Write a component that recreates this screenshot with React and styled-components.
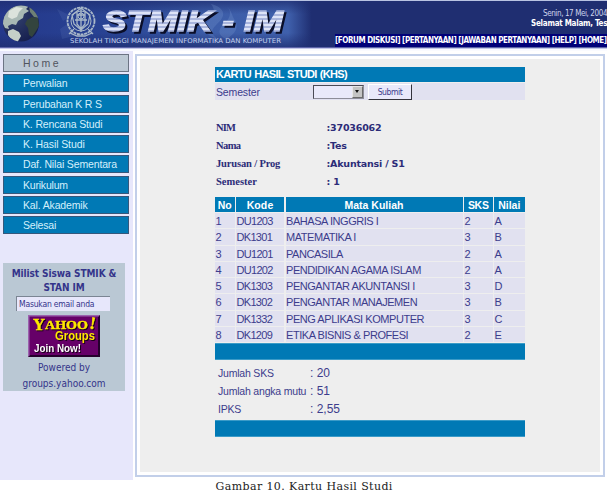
import React from "react";
import styled, { createGlobalStyle } from "styled-components";

const GlobalStyle = createGlobalStyle`
  * {
    box-sizing: border-box;
  }
  body {
    margin: 0;
    width: 607px;
    height: 494px;
    overflow: hidden;
    background: #fff;
    color: #3c3c8c;
    font-family: "Liberation Sans", Arial, sans-serif;
    font-size: 11px;
  }
`;

const Page = styled.div`
  width: 607px;
  height: 494px;
  overflow: hidden;
`;

const Header = styled.header`
  display: flex;
  height: 51px;
  border-top: 1px solid #b9c3e2;
  background: linear-gradient(#1f2e71 46px, #5d64a8 46px, #5d64a8 47px, #c3c7e8 47px, #c3c7e8 48px, #fafbff 48px);
`;

const Banner = styled.svg`
  flex: none;
  width: 335px;
  height: 46px;
`;

const BannerTitle = styled.text`
  font: italic bold 30px "Liberation Sans", Arial, sans-serif;
  filter: drop-shadow(2px 2px 0 #0a0e28);
`;

const HeaderInfo = styled.div`
  width: 272px;
  height: 46px;
  overflow: hidden;
  white-space: nowrap;
  color: #fff;
  font-family: "DejaVu Sans Condensed", "DejaVu Sans", sans-serif;
`;

const Today = styled.div`
  padding: 7px 0 0 208px;
  height: 17px;
  font-size: 8px;
  line-height: 12px;
  color: #cdd3ec;
  letter-spacing: -0.4px;
`;

const Greeting = styled.div`
  padding-left: 196px;
  height: 16px;
  font-size: 8px;
  font-weight: bold;
  line-height: 11px;
  letter-spacing: -0.25px;
`;

const TopLinks = styled.nav`
  height: 13px;
  background: #000078;
  font-size: 8px;
  font-weight: bold;
  line-height: 13px;
  letter-spacing: -0.44px;
`;

const Body = styled.div`
  display: flex;
  height: 429px;
`;

const Sidebar = styled.aside`
  width: 133px;
  padding: 3px 0 0 3px;
  background: #e7e7fb;
`;

const Menu = styled.div`
  display: flex;
  flex-direction: column;
  gap: 2.3px;
  height: 182px;
`;

const MenuItem = styled.div`
  width: 126px;
  height: 18px;
  flex: none;
  padding-left: 19px;
  border: 1px solid ${(props) => (props.$active ? "#6c7484" : "#35587c")};
  background: ${(props) => (props.$active ? "#bcc8d4" : "#0079b5")};
  color: ${(props) => (props.$active ? "#50545e" : "#d4f0fc")};
  font-size: 10.5px;
  line-height: 17px;
  letter-spacing: ${(props) => props.$spacing || 0}px;
  white-space: nowrap;
`;

const Milist = styled.div`
  display: flex;
  flex-direction: column;
  align-items: center;
  width: 122px;
  height: 128px;
  margin-top: 27px;
  padding-top: 4px;
  background: #bac8d4;
  color: #34348a;
  font-family: "DejaVu Sans Condensed", "DejaVu Sans", sans-serif;
`;

const MilistTitle = styled.div`
  font-size: 10px;
  font-weight: bold;
  line-height: 13.5px;
  height: 30px;
  text-align: center;
  white-space: nowrap;
  letter-spacing: -0.08px;
`;

const EmailInput = styled.div`
  width: 94px;
  height: 15px;
  margin-right: 2px;
  padding-left: 2px;
  border-top: 1px solid #7b8593;
  border-left: 1px solid #7b8593;
  background: #e7e7fb;
  font-size: 8.5px;
  line-height: 14px;
  white-space: nowrap;
  letter-spacing: -0.2px;
`;

const YahooBadge = styled.svg`
  width: 72px;
  height: 42px;
  margin: 4px 0 3px;
  flex: none;
`;

const YahooName = styled.g`
  font-family: "Liberation Serif", serif;
  font-weight: bold;
  fill: #ffe800;
  stroke: #ffe800;
  stroke-width: 0.4px;
  filter: drop-shadow(1px 1px 0 #180018);
`;

const YahooTagline = styled.g`
  font-family: "Liberation Sans", Arial, sans-serif;
  font-weight: bold;
  filter: drop-shadow(1px 1px 0 #180018);
`;

const Powered = styled.div`
  font-size: 10px;
  line-height: 15.5px;
  text-align: center;
`;

const Main = styled.main`
  width: 470px;
  margin: 3px 0 0 2px;
  height: 423px;
  padding: 3px;
  border: 2px solid #c2cfe9;
  background: #fff;
`;

const Panel = styled.div`
  height: 413px;
  padding: 8px 0 0 75px;
  background: #eee;
`;

const Sheet = styled.div`
  width: 309.5px;
`;

const SheetTitle = styled.div`
  height: 15px;
  padding-left: 1px;
  background: #0079b5;
  color: #fff;
  font-size: 11px;
  font-weight: bold;
  line-height: 15px;
  letter-spacing: -0.7px;
  word-spacing: 1px;
`;

const FilterRow = styled.div`
  display: flex;
  align-items: center;
  height: 17px;
  margin-top: 1px;
  padding-left: 1px;
  background: #e1e1f0;
`;

const FilterLabel = styled.span`
  width: 96.5px;
  font-size: 10.5px;
  letter-spacing: -0.15px;
`;

const Select = styled.div`
  display: flex;
  justify-content: flex-end;
  width: 51px;
  height: 14px;
  border: 1px solid #4a4a55;
  border-right-color: #8d8d99;
  border-bottom-color: #8d8d99;
  background: #e9e9fa;
`;

const SelectArrow = styled.span`
  display: flex;
  align-items: center;
  justify-content: center;
  width: 11px;
  height: 12px;
  background: #c4c4c4;
  border: 1px solid #e6e6e6;
  border-right-color: #6a6a6a;
  border-bottom-color: #6a6a6a;

  &::after {
    content: "";
    border: 2px solid transparent;
    border-top: 3px solid #111;
    border-bottom: 0;
  }
`;

const Submit = styled.div`
  width: 44px;
  height: 16px;
  margin-left: 4.5px;
  border: 1px solid #fff;
  border-right: 1px solid #34343c;
  border-bottom: 1px solid #34343c;
  background: #e9e9fa;
  font-family: "DejaVu Sans Condensed", "DejaVu Sans", sans-serif;
  font-size: 8.5px;
  line-height: 14px;
  text-align: center;
  letter-spacing: -0.4px;
`;

const Info = styled.div`
  display: grid;
  grid-template-columns: 110.5px 1fr;
  grid-auto-rows: 17.9px;
  margin-top: 19px;
  height: 78px;
  padding-left: 1px;
  line-height: 17.9px;
  color: #2c2c78;
  font-weight: bold;
`;

const InfoLabel = styled.span`
  font-family: "Liberation Serif", serif;
  font-size: 10.5px;
  letter-spacing: ${(props) => props.$spacing || 0}px;
`;

const InfoValue = styled.span`
  font-family: "DejaVu Sans", sans-serif;
  font-size: 9.5px;
  letter-spacing: -0.2px;
`;

const Grades = styled.div`
  display: grid;
  grid-template-columns: 19.5px 48px 177px 28.5px 30.5px;
  grid-template-rows: 15px repeat(8, 15.3px);
  column-gap: 1.5px;
  row-gap: 1px;
  margin-bottom: 1px;
`;

const HeadCell = styled.div`
  background: #0079b5;
  color: #fff;
  font-weight: bold;
  font-size: 10.5px;
  line-height: 16px;
  text-align: center;
  letter-spacing: ${(props) => props.$spacing || 0}px;
`;

const Cell = styled.div`
  padding-left: 0.5px;
  background: #e1e1f0;
  font-size: 11px;
  line-height: 16px;
  white-space: nowrap;
  letter-spacing: ${(props) => props.$spacing || -0.2}px;
`;

const Bar = styled.div`
  height: 17px;
  border-top: 1px solid #3b9bc8;
  border-bottom: 1px solid #3b9bc8;
  background: #0079b5;
`;

const Summary = styled.div`
  display: grid;
  grid-template-columns: 92px 1fr;
  grid-auto-rows: 17.7px;
  height: 60px;
  padding: 4px 0 0 3px;
  line-height: 18.5px;
  white-space: nowrap;
`;

const SummaryLabel = styled.span`
  font-size: 10.5px;
  letter-spacing: -0.2px;
`;

const SummaryValue = styled.span`
  font-size: 12px;
`;

const Caption = styled.div`
  padding-left: 215.5px;
  color: #222;
  font-family: "DejaVu Serif", serif;
  font-size: 11px;
  line-height: 14px;
  white-space: nowrap;
  letter-spacing: 0.4px;
`;

const menu = [
  { label: "H o m e", active: true, spacing: -0.2 },
  { label: "Perwalian", spacing: -0.2 },
  { label: "Perubahan K R S", spacing: -0.2 },
  { label: "K. Rencana Studi", spacing: -0.15 },
  { label: "K. Hasil Studi", spacing: -0.1 },
  { label: "Daf. Nilai Sementara", spacing: -0.15 },
  { label: "Kurikulum", spacing: -0.2 },
  { label: "Kal. Akademik", spacing: -0.15 },
  { label: "Selesai", spacing: -0.2 },
];

const info = [
  { label: "NIM", value: ":37036062", spacing: -0.8 },
  { label: "Nama", value: ":Tes", spacing: -0.6 },
  { label: "Jurusan / Prog", value: ":Akuntansi / S1", spacing: -0.15 },
  { label: "Semester", value: ": 1" },
];

const grades = [
  ["DU1203", "BAHASA INGGRIS I", 2, "A"],
  ["DK1301", "MATEMATIKA I", 3, "B"],
  ["DU1201", "PANCASILA", 2, "A"],
  ["DU1202", "PENDIDIKAN AGAMA ISLAM", 2, "A"],
  ["DK1303", "PENGANTAR AKUNTANSI I", 3, "D"],
  ["DK1302", "PENGANTAR MANAJEMEN", 3, "B"],
  ["DK1332", "PENG APLIKASI KOMPUTER", 3, "C"],
  ["DK1209", "ETIKA BISNIS & PROFESI", 2, "E"],
];

function HeaderBanner() {
  return (
    <Banner viewBox="0 1 335 46">
      <defs>
        <linearGradient id="sky">
          <stop offset="0" stopColor="#24388b" />
          <stop offset="0.35" stopColor="#294494" />
          <stop offset="0.62" stopColor="#3c5da8" />
          <stop offset="0.86" stopColor="#3f60ac" />
          <stop offset="0.93" stopColor="#1f2e71" />
        </linearGradient>
        <linearGradient id="shade" x2="0" y2="1">
          <stop offset="0" stopColor="#1f2e71" stopOpacity="0.8" />
          <stop offset="0.3" stopColor="#1f2e71" stopOpacity="0" />
          <stop offset="0.7" stopColor="#1f2e71" stopOpacity="0" />
          <stop offset="1" stopColor="#1f2e71" stopOpacity="0.75" />
        </linearGradient>
        <radialGradient id="globe" cx="0.3" cy="0.3" r="0.75">
          <stop offset="0" stopColor="#33426f" />
          <stop offset="1" stopColor="#17204f" />
        </radialGradient>
        <pattern id="chrome" width="4" height="4" patternUnits="userSpaceOnUse">
          <rect width="4" height="4" fill="#dde3f7" />
          <rect y="2" width="4" height="2" fill="#a9b5dd" />
        </pattern>
        <clipPath id="disc">
          <circle cx="21" cy="23.5" r="18" />
        </clipPath>
      </defs>
      <rect width="335" height="47" fill="url(#sky)" />
      <rect width="335" height="47" fill="url(#shade)" />
      <g fill="#8faee0" opacity="0.2">
        <path d="M211 4c12 3 16 10 8 18s-10 11-1 17c-14-4-17-11-8-20 5-5 5-10 1-15z" />
        <path d="M225 5c8 5 6 13-2 20-6 6-4 11 3 14 9-5 14-12 8-20-3-6-3-10-9-14z" />
      </g>
      <path d="M57 9l14 7-8 5zM60 29l10-7 4 14-12 3z" fill="#8faee0" opacity="0.1" />
      <circle cx="21" cy="23.5" r="18" fill="url(#globe)" />
      <g clipPath="url(#disc)">
        <path d="M3 24C2 13 10 6 21 5l8 1-3 3 3 2-5 3-1 4-5 3-2 4-4-1-4 2 1 3-4-1z" fill="#a8b8b4" />
        <path d="M9 11l7-4 7 1-4 4-2 5-5 2-4-2z" fill="#dce3dc" />
        <path d="M8 31l5-2 6 3 2 4-4 7-5-2-4-6z" fill="#c5d0c8" />
        <path d="M29 6l5 3 5 9-5-1-4-5z" fill="#6f8175" />
        <path d="M27 20l5-3 6 1 1 8-3 5-4 6-3-2-1-7-3-4z" fill="#33443e" />
      </g>
      <g fill="none" stroke="#aab9c9">
        <circle cx="81" cy="21" r="13.5" strokeWidth="1.8" strokeDasharray="3 .7" />
        <circle cx="81" cy="21" r="10" strokeWidth="1" />
        <path d="M72 15l9-7 9 7-2 9-7 6-7-6z" strokeWidth="1.2" />
        <path d="M81 9v23M77 12v12l4 5 4-5V12M75 20h12M77 15h8M74 29l-5 5M88 29l5 5M70 33l7 3h8l7-3" strokeWidth="1.3" />
        <circle cx="81" cy="16" r="3" />
      </g>
      <BannerTitle x="103" y="31" fill="url(#chrome)" stroke="url(#chrome)" strokeWidth="1.3" textLength="180" lengthAdjust="spacingAndGlyphs">
        STMIK - IM
      </BannerTitle>
      <text x="70" y="43" fill="#c3d0ee" fontFamily="DejaVu Sans, sans-serif" fontSize="6.5" textLength="211" lengthAdjust="spacingAndGlyphs">
        SEKOLAH TINGGI MANAJEMEN INFORMATIKA DAN KOMPUTER
      </text>
    </Banner>
  );
}

function YahooGroups() {
  return (
    <YahooBadge viewBox="0 0 72 42">
      <rect width="72" height="42" fill="#24002c" />
      <path d="M0 0h72l-2 2H2v38l-2 2z" fill="#9b62ae" />
      <rect x="1.5" y="1.5" width="68.5" height="38.5" fill="#660068" />
      <YahooName>
        <text x="5" y="14.5" fontSize="17" textLength="12" lengthAdjust="spacingAndGlyphs">Y</text>
        <text x="17" y="13.500" fontSize="13" textLength="43" lengthAdjust="spacingAndGlyphs">AHOO</text>
        <text x="61" y="13.500" fontSize="17" transform="rotate(10 62 13)">!</text>
      </YahooName>
      <YahooTagline>
        <text x="27" y="25" fontSize="12" fill="#ffe800" textLength="40" lengthAdjust="spacingAndGlyphs">Groups</text>
        <text x="6" y="37" fontSize="11.5" fill="#fff" textLength="47" lengthAdjust="spacingAndGlyphs">Join Now!</text>
      </YahooTagline>
    </YahooBadge>
  );
}

function App() {
  return (
    <Page>
      <GlobalStyle />
      <Header>
        <HeaderBanner />
        <HeaderInfo>
          <Today>Senin, 17 Mei, 2004</Today>
          <Greeting>Selamat Malam, Tes</Greeting>
          <TopLinks>[FORUM DISKUSI] [PERTANYAAN] [JAWABAN PERTANYAAN] [HELP] [HOME]</TopLinks>
        </HeaderInfo>
      </Header>
      <Body>
        <Sidebar>
          <Menu>
            {menu.map((item) => (
              <MenuItem key={item.label} $active={item.active} $spacing={item.spacing}>
                {item.label}
              </MenuItem>
            ))}
          </Menu>
          <Milist>
            <MilistTitle>
              Milist Siswa STMIK &amp;
              <br />
              STAN IM
            </MilistTitle>
            <EmailInput>Masukan email anda</EmailInput>
            <YahooGroups />
            <Powered>Powered by</Powered>
            <Powered>groups.yahoo.com</Powered>
          </Milist>
        </Sidebar>
        <Main>
          <Panel>
            <Sheet>
              <SheetTitle>KARTU HASIL STUDI (KHS)</SheetTitle>
              <FilterRow>
                <FilterLabel>Semester</FilterLabel>
                <Select>
                  <SelectArrow />
                </Select>
                <Submit>Submit</Submit>
              </FilterRow>
              <Info>
                {info.map((row) => (
                  <React.Fragment key={row.label}>
                    <InfoLabel $spacing={row.spacing}>{row.label}</InfoLabel>
                    <InfoValue>{row.value}</InfoValue>
                  </React.Fragment>
                ))}
              </Info>
              <Grades>
                <HeadCell>No</HeadCell>
                <HeadCell $spacing={0.1}>Kode</HeadCell>
                <HeadCell>Mata Kuliah</HeadCell>
                <HeadCell $spacing={-0.3}>SKS</HeadCell>
                <HeadCell>Nilai</HeadCell>
                {grades.map(([kode, nama, sks, nilai], i) => (
                  <React.Fragment key={kode}>
                    <Cell>{i + 1}</Cell>
                    <Cell $spacing={-0.7}>{kode}</Cell>
                    <Cell $spacing={-0.45}>{nama}</Cell>
                    <Cell>{sks}</Cell>
                    <Cell>{nilai}</Cell>
                  </React.Fragment>
                ))}
              </Grades>
              <Bar />
              <Summary>
                <SummaryLabel>Jumlah SKS</SummaryLabel>
                <SummaryValue>: 20</SummaryValue>
                <SummaryLabel>Jumlah angka mutu</SummaryLabel>
                <SummaryValue>: 51</SummaryValue>
                <SummaryLabel>IPKS</SummaryLabel>
                <SummaryValue>: 2,55</SummaryValue>
              </Summary>
              <Bar />
            </Sheet>
          </Panel>
        </Main>
      </Body>
      <Caption>Gambar 10. Kartu Hasil Studi</Caption>
    </Page>
  );
}

export default App;
